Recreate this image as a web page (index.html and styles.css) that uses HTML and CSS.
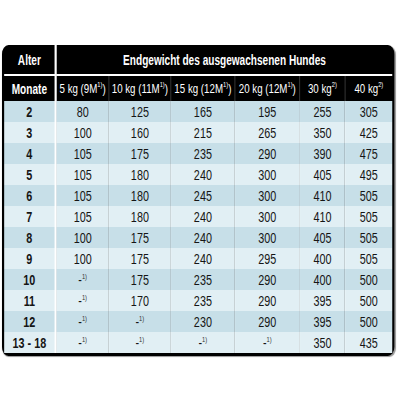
FILE: index.html
```html
<!DOCTYPE html>
<html>
<head>
<meta charset="utf-8">
<link rel="stylesheet" href="styles.css">
</head>
<body>
<div class="wrap">
<div class="frame">
<table class="grid">
<colgroup>
<col class="c0"><col class="c1"><col class="c2"><col class="c3"><col class="c4"><col class="c5"><col class="c6">
</colgroup>
<thead>
<tr class="h1"><th class="first">Alter</th><th colspan="6">Endgewicht des ausgewachsenen Hundes</th></tr>
<tr class="h2"><th class="first">Monate</th><th>5 kg (9M<sup>1)</sup>)</th><th>10 kg (11M<sup>1)</sup>)</th><th>15 kg (12M<sup>1)</sup>)</th><th>20 kg (12M<sup>1)</sup>)</th><th>30 kg<sup>2)</sup></th><th>40 kg<sup>2)</sup></th></tr>
</thead>
<tbody>
<tr class="d"><td class="first">2</td><td>80</td><td>125</td><td>165</td><td>195</td><td>255</td><td>305</td></tr>
<tr class="l"><td class="first">3</td><td>100</td><td>160</td><td>215</td><td>265</td><td>350</td><td>425</td></tr>
<tr class="d"><td class="first">4</td><td>105</td><td>175</td><td>235</td><td>290</td><td>390</td><td>475</td></tr>
<tr class="l"><td class="first">5</td><td>105</td><td>180</td><td>240</td><td>300</td><td>405</td><td>495</td></tr>
<tr class="d"><td class="first">6</td><td>105</td><td>180</td><td>245</td><td>300</td><td>410</td><td>505</td></tr>
<tr class="l"><td class="first">7</td><td>105</td><td>180</td><td>240</td><td>300</td><td>410</td><td>505</td></tr>
<tr class="d"><td class="first">8</td><td>100</td><td>175</td><td>240</td><td>300</td><td>405</td><td>505</td></tr>
<tr class="l"><td class="first">9</td><td>100</td><td>175</td><td>240</td><td>295</td><td>400</td><td>505</td></tr>
<tr class="d"><td class="first">10</td><td>-<sup>1)</sup></td><td>175</td><td>235</td><td>290</td><td>400</td><td>500</td></tr>
<tr class="l"><td class="first">11</td><td>-<sup>1)</sup></td><td>170</td><td>235</td><td>290</td><td>395</td><td>500</td></tr>
<tr class="d"><td class="first">12</td><td>-<sup>1)</sup></td><td>-<sup>1)</sup></td><td>230</td><td>290</td><td>395</td><td>500</td></tr>
<tr class="l"><td class="first">13 - 18</td><td>-<sup>1)</sup></td><td>-<sup>1)</sup></td><td>-<sup>1)</sup></td><td>-<sup>1)</sup></td><td>350</td><td>435</td></tr>
</tbody>
</table>
</div>
</div>
</body>
</html>
```
FILE: styles.css
```css
html, body {
  margin: 0;
  padding: 0;
  background: #ffffff;
}
body {
  font-family: "Liberation Sans", Arial, sans-serif;
}
.wrap {
  width: 400px;
  height: 400px;
  overflow: hidden;
  padding-top: 45px;
  box-sizing: border-box;
}
/* the table is drawn wide and squeezed horizontally to mimic a condensed face */
.frame {
  margin-left: 2px;
  width: 539px;
  background: #000;
  border-radius: 9px;
  padding: 0 3px 3px 3px;
  transform: scaleX(0.72);
  transform-origin: 0 0;
  box-shadow: 1px 1px 1px #999;
}
.grid {
  width: 539px;
  table-layout: fixed;
  border-collapse: separate;
  border-spacing: 0;
}
.c0 { width: 73px; }
.c1 { width: 72px; }
.c2 { width: 86px; }
.c3 { width: 89px; }
.c4 { width: 90px; }
.c5 { width: 63px; }
.c6 { width: 66px; }
th, td {
  padding: 0;
  text-align: center;
  white-space: nowrap;
}
th {
  color: #fff;
  font-size: 13.5px;
  font-weight: normal;
}
.h1 th {
  height: 29px;
  font-weight: bold;
  font-size: 14px;
  border-bottom: 2px solid #fff;
}
.h2 th {
  height: 25px;
  border-left: 1px solid #4a4a4a;
}
.h2 th.first {
  border-left: none;
  font-weight: bold;
  font-size: 14px;
}
th.first, td.first {
  border-right: 3px solid #fff;
}
.h2 th:nth-child(2) { border-left: none; }
td {
  height: 21px;
  font-size: 15px;
  color: #151515;
  border-left: 1px solid #d4e7ee;
}
td:nth-child(2) { border-left: none; }
td.first {
  font-weight: bold;
  border-left: none;
}
tr.d td { background: #c7dfe8; }
tr.l td { background: #e1eff4; border-left-color: #eef6f9; }
tr.l td:nth-child(2), tr.l td.first { border-left: none; }
sup {
  font-size: 8px;
  vertical-align: 6px;
  line-height: 0;
}
td sup { color: #333; }
```
